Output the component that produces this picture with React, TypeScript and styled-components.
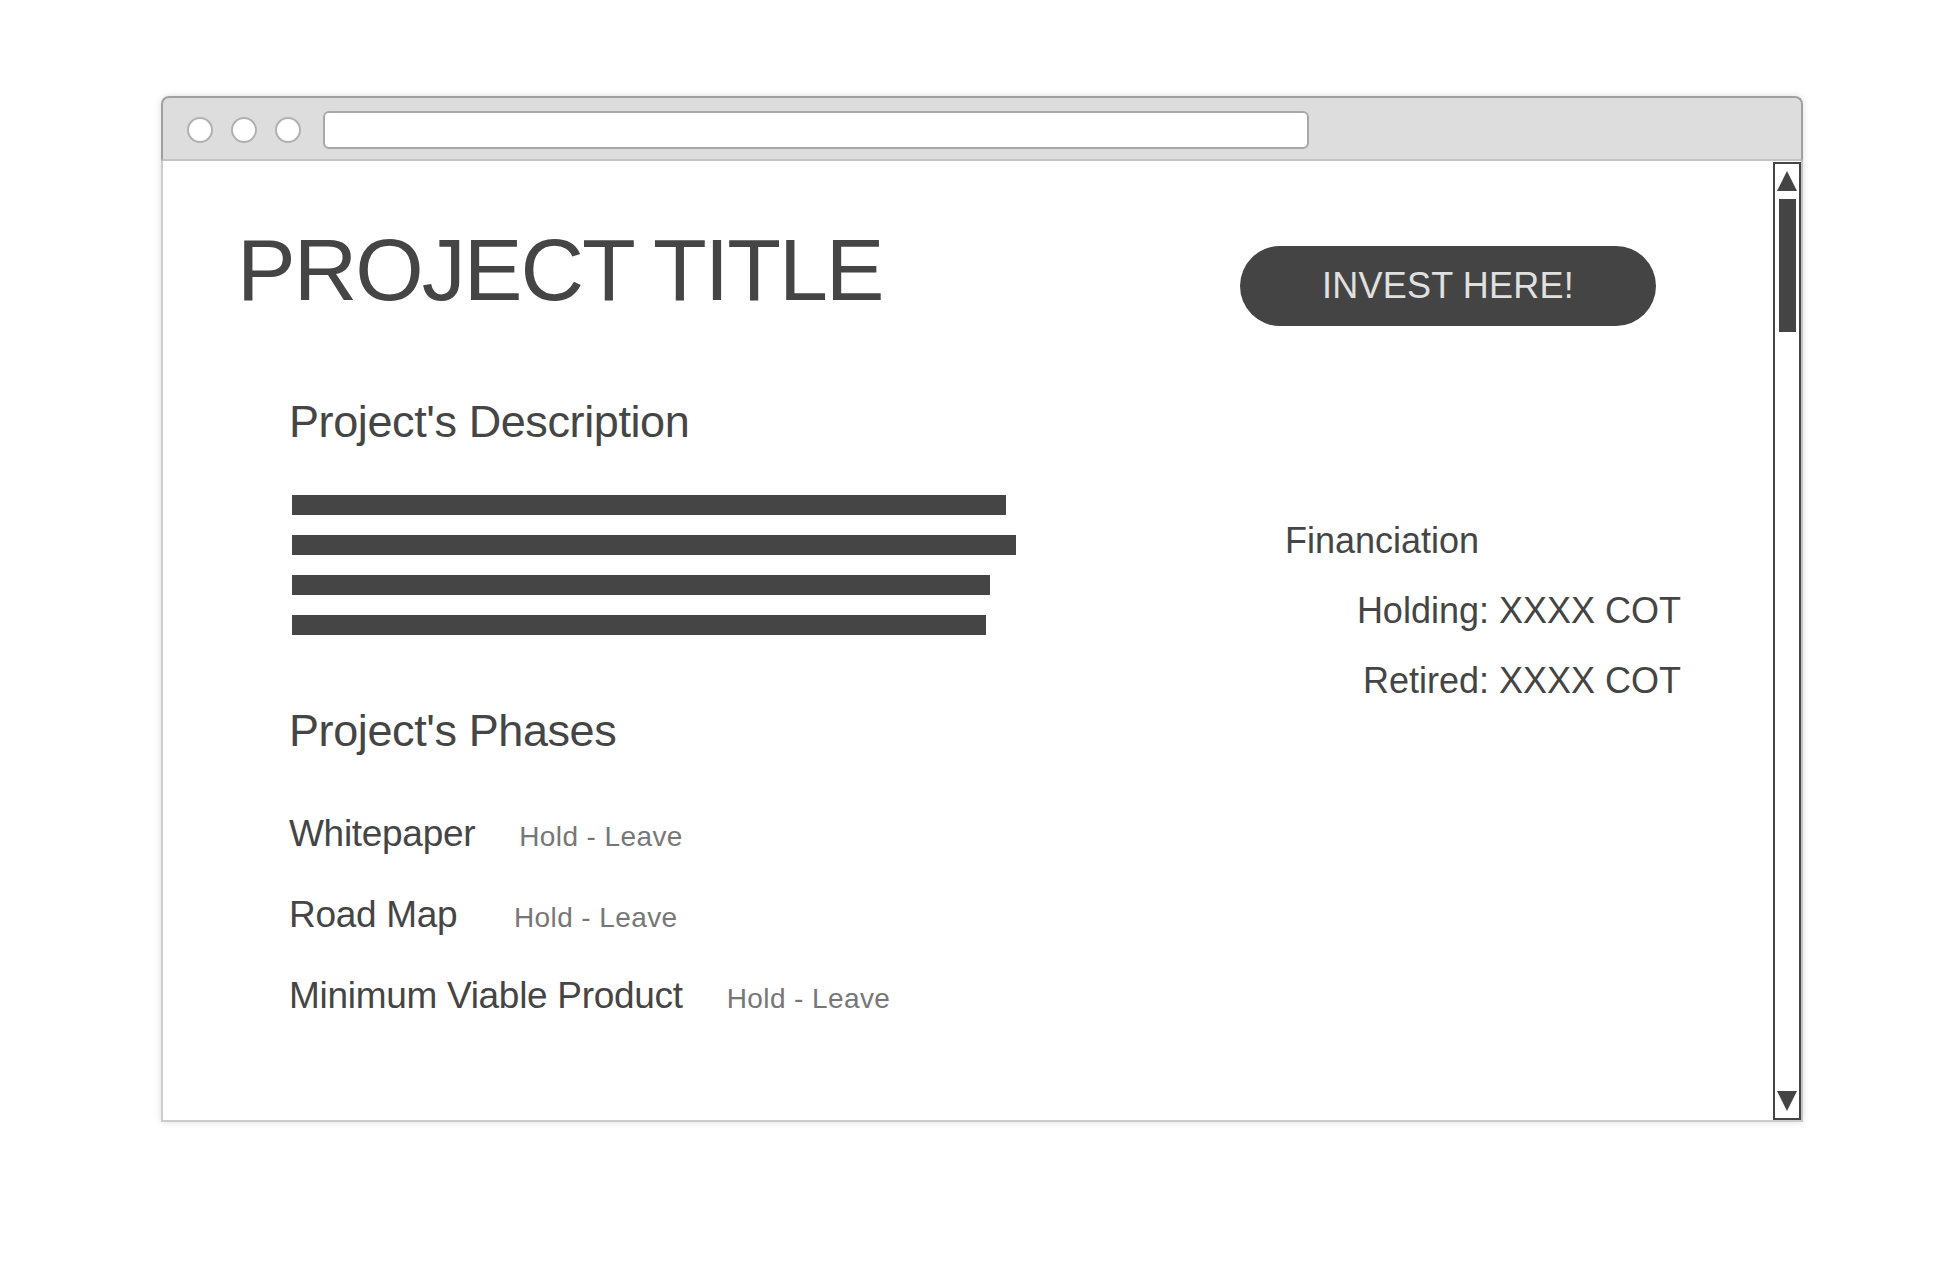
import React from 'react';
import styled, { createGlobalStyle } from 'styled-components';

const ink = '#454545';

const GlobalStyle = createGlobalStyle`
  html, body {
    margin: 0;
    padding: 0;
    background: #ffffff;
  }
  body {
    font-family: 'Liberation Sans', Arial, sans-serif;
    color: ${ink};
  }
`;

const StyledPage = styled.div`
  width: 1960px;
  height: 1280px;
  padding: 96px 0 0 161px;
  box-sizing: border-box;
`;

const StyledWindow = styled.div`
  width: 1642px;
  display: flex;
  flex-direction: column;
  border-radius: 8px 8px 0 0;
  box-shadow: 0 0 7px rgba(0, 0, 0, 0.14);
`;

const StyledTitleBar = styled.div`
  height: 65px;
  box-sizing: border-box;
  display: flex;
  align-items: center;
  gap: 18px;
  padding: 3px 0 0 24px;
  background: #dddddd;
  border: 2px solid #a0a0a0;
  border-bottom: 2px solid #c4c4c4;
  border-radius: 8px 8px 0 0;
`;

const StyledDot = styled.span`
  width: 26px;
  height: 26px;
  box-sizing: border-box;
  border-radius: 50%;
  background: #ffffff;
  border: 2px solid #b0b0b0;
`;

const StyledAddressBar = styled.div`
  width: 986px;
  height: 38px;
  box-sizing: border-box;
  margin-left: 4px;
  background: #ffffff;
  border: 2px solid #a8a8a8;
  border-radius: 6px;
`;

const StyledViewport = styled.div`
  height: 961px;
  box-sizing: border-box;
  display: flex;
  background: #ffffff;
  border-left: 2px solid #cccccc;
  border-right: 2px solid #c4c4c4;
  border-bottom: 2px solid #cccccc;
`;

const StyledMain = styled.div`
  flex: 1;
  display: flex;
  padding: 65px 0 0 74px;
`;

const StyledLeftColumn = styled.div`
  width: 1003px;
  display: flex;
  flex-direction: column;
`;

const StyledRightColumn = styled.div`
  width: 441px;
  display: flex;
  flex-direction: column;
  padding-top: 20px;
`;

const StyledTitle = styled.h1`
  margin: 0;
  font-size: 88px;
  font-weight: 400;
  line-height: 1;
  letter-spacing: -2px;
  color: ${ink};
`;

const StyledSectionTitle = styled.h2<{ gapAbove: number }>`
  margin: ${props => props.gapAbove}px 0 0 52px;
  font-size: 45px;
  font-weight: 400;
  line-height: 1;
  letter-spacing: -0.4px;
  color: ${ink};
`;

const StyledTextLines = styled.div`
  margin: 51px 0 0 55px;
  display: flex;
  flex-direction: column;
  gap: 20px;
`;

const StyledTextLine = styled.div<{ width: number }>`
  width: ${props => props.width}px;
  height: 20px;
  background: ${ink};
`;

const StyledPhaseList = styled.ul`
  list-style: none;
  margin: 62px 0 0 52px;
  padding: 0;
  display: flex;
  flex-direction: column;
  gap: 44px;
`;

const StyledPhaseRow = styled.li`
  display: flex;
  align-items: baseline;
  gap: 44px;
`;

const StyledPhaseName = styled.span`
  min-width: 181px;
  font-size: 37px;
  line-height: 1;
  letter-spacing: -0.3px;
  color: ${ink};
`;

const StyledPhaseStatus = styled.span`
  font-size: 28px;
  line-height: 1;
  letter-spacing: 0.4px;
  color: #777777;
`;

const StyledInvestButton = styled.button`
  width: 416px;
  height: 80px;
  border: none;
  border-radius: 40px;
  background: #444444;
  color: #e0e0e0;
  font-family: 'Liberation Sans', Arial, sans-serif;
  font-size: 36px;
  letter-spacing: 0.2px;
  cursor: pointer;
`;

const StyledFinanceTitle = styled.div`
  margin: 197px 0 0 45px;
  font-size: 36px;
  line-height: 1;
  color: ${ink};
`;

const StyledFinanceList = styled.div`
  margin-top: 34px;
  display: flex;
  flex-direction: column;
  align-items: flex-end;
  gap: 34px;
`;

const StyledFinanceLine = styled.div`
  font-size: 36px;
  line-height: 1;
  color: ${ink};
`;

const StyledScrollbar = styled.div`
  width: 28px;
  box-sizing: border-box;
  margin-top: 1px;
  display: flex;
  flex-direction: column;
  align-items: center;
  padding: 7px 0;
  border: 2px solid #444444;
`;

const StyledArrow = styled.div<{ down?: boolean }>`
  width: 0;
  height: 0;
  border-left: 10px solid transparent;
  border-right: 10px solid transparent;
  ${props =>
    props.down
      ? `border-top: 20px solid #444444;`
      : `border-bottom: 20px solid #444444;`}
`;

const StyledThumb = styled.div`
  width: 17px;
  height: 133px;
  margin-top: 8px;
  background: #444444;
`;

const StyledScrollSpacer = styled.div`
  flex: 1;
`;

const descriptionLines = [714, 724, 698, 694];

const phases = ['Whitepaper', 'Road Map', 'Minimum Viable Product'];

const App = () => {
  return (
    <>
      <GlobalStyle />
      <StyledPage>
        <StyledWindow>
          <StyledTitleBar>
            <StyledDot />
            <StyledDot />
            <StyledDot />
            <StyledAddressBar />
          </StyledTitleBar>
          <StyledViewport>
            <StyledMain>
              <StyledLeftColumn>
                <StyledTitle>PROJECT TITLE</StyledTitle>
                <StyledSectionTitle gapAbove={85}>Project's Description</StyledSectionTitle>
                <StyledTextLines>
                  {descriptionLines.map((w, i) => (
                    <StyledTextLine key={i} width={w} />
                  ))}
                </StyledTextLines>
                <StyledSectionTitle gapAbove={73}>Project's Phases</StyledSectionTitle>
                <StyledPhaseList>
                  {phases.map(name => (
                    <StyledPhaseRow key={name}>
                      <StyledPhaseName>{name}</StyledPhaseName>
                      <StyledPhaseStatus>Hold - Leave</StyledPhaseStatus>
                    </StyledPhaseRow>
                  ))}
                </StyledPhaseList>
              </StyledLeftColumn>
              <StyledRightColumn>
                <StyledInvestButton>INVEST HERE!</StyledInvestButton>
                <StyledFinanceTitle>Financiation</StyledFinanceTitle>
                <StyledFinanceList>
                  <StyledFinanceLine>Holding: XXXX COT</StyledFinanceLine>
                  <StyledFinanceLine>Retired: XXXX COT</StyledFinanceLine>
                </StyledFinanceList>
              </StyledRightColumn>
            </StyledMain>
            <StyledScrollbar>
              <StyledArrow />
              <StyledThumb />
              <StyledScrollSpacer />
              <StyledArrow down />
            </StyledScrollbar>
          </StyledViewport>
        </StyledWindow>
      </StyledPage>
    </>
  );
};

export default App;
